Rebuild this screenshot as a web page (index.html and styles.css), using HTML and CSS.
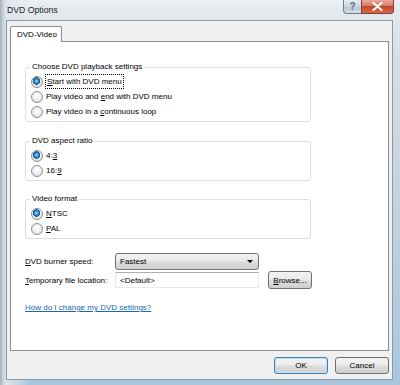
FILE: index.html
```html
<!DOCTYPE html>
<html lang="en">
<head>
    <meta charset="UTF-8">
    <title>DVD Options</title>
    <link rel="stylesheet" href="styles.css">
</head>
<body>
    <div class="window">
        <div class="titlebar">
            <div class="title">DVD Options</div>
            <div class="caption-buttons">
                <div class="cap-btn cap-help">?</div>
                <div class="cap-btn cap-close">
                    <svg width="11" height="9" viewBox="0 0 11 9">
                        <path d="M1.5 1 L9.5 8 M9.5 1 L1.5 8" stroke="#ffffff" stroke-width="2.2" stroke-linecap="round"/>
                    </svg>
                </div>
            </div>
        </div>

        <div class="client">
            <div class="tabs">
                <div class="tab">DVD-Video</div>
            </div>

            <div class="panel">
                <fieldset class="group">
                    <legend>Choose DVD playback settings</legend>
                    <label class="option"><input type="radio" name="play" checked><span class="focus"><u>S</u>tart with DVD menu</span></label>
                    <label class="option"><input type="radio" name="play"><span>Play video and <u>e</u>nd with DVD menu</span></label>
                    <label class="option"><input type="radio" name="play"><span>Play video in a <u>c</u>ontinuous loop</span></label>
                </fieldset>

                <fieldset class="group group-aspect">
                    <legend>DVD aspect ratio</legend>
                    <label class="option"><input type="radio" name="aspect" checked><span>4:<u>3</u></span></label>
                    <label class="option"><input type="radio" name="aspect"><span>16:<u>9</u></span></label>
                </fieldset>

                <fieldset class="group group-format">
                    <legend>Video format</legend>
                    <label class="option"><input type="radio" name="format" checked><span><u>N</u>TSC</span></label>
                    <label class="option"><input type="radio" name="format"><span><u>P</u>AL</span></label>
                </fieldset>

                <div class="setting-row">
                    <span class="setting-label"><u>D</u>VD burner speed:</span>
                    <div class="combo">
                        <span>Fastest</span>
                        <span class="combo-arrow"></span>
                    </div>
                </div>
                <div class="setting-row">
                    <span class="setting-label"><u>T</u>emporary file location:</span>
                    <div class="textbox">&lt;Default&gt;</div>
                    <button class="btn btn-browse"><u>B</u>rowse...</button>
                </div>

                <a href="#" class="help-link">How do I change my DVD settings?</a>
            </div>

            <div class="dialog-buttons">
                <button class="btn btn-default">OK</button>
                <button class="btn">Cancel</button>
            </div>
        </div>
    </div>
</body>
</html>
```

FILE: styles.css
```css
* {
    box-sizing: border-box;
}

body {
    margin: 0;
    width: 400px;
    height: 385px;
    overflow: hidden;
    font-family: "Liberation Sans", Arial, sans-serif;
    font-size: 8px;
    line-height: 13px;
    color: #000000;
}

.window {
    width: 400px;
    height: 385px;
    display: flex;
    flex-direction: column;
    background:
        linear-gradient(90deg, #9fb1c2 0px, #c9d3dc 3px, #dfe5ea 6px, rgba(223, 229, 234, 0) 30px),
        linear-gradient(180deg, #eef1f3 0px, #e4e9ed 10px, #d6dee5 60px, #bccfde 250px, #a9c6dc 385px);
}

.titlebar {
    height: 20px;
    display: flex;
    justify-content: space-between;
    align-items: flex-start;
}

.title {
    padding: 4px 0 0 7px;
    font-size: 8.7px;
    color: #1c1c1c;
}

.caption-buttons {
    display: flex;
    margin-right: 6px;
}

.cap-btn {
    height: 14px;
    display: flex;
    align-items: center;
    justify-content: center;
    border: 1px solid #6d7c8c;
    border-top: none;
}

.cap-help {
    width: 18px;
    border-radius: 0 0 0 4px;
    border-right: none;
    background: linear-gradient(180deg, #e6ecf1 0%, #cad5df 50%, #b6c5d2 51%, #d3dee7 100%);
    color: #5b6a7a;
    font-size: 10px;
    font-weight: bold;
}

.cap-close {
    width: 33px;
    border-radius: 0 0 4px 0;
    border-color: #8a3a2e;
    background: linear-gradient(180deg, #e8a99b 0%, #d47a67 45%, #c2452b 50%, #d76b4a 100%);
}

.client {
    flex: 1;
    margin: 0 7px 5px 6px;
    border: 1px solid #8d9aa8;
    background-color: #f0f0f0;
    padding: 5px 3px 0 3px;
    display: flex;
    flex-direction: column;
}

.tabs {
    display: flex;
    height: 15px;
}

.tab {
    position: relative;
    z-index: 1;
    width: 52px;
    height: 16px;
    padding: 1px 0 0 6px;
    background-color: #ffffff;
    border: 1px solid #898c95;
    border-bottom: none;
    border-radius: 2px 2px 0 0;
}

.panel {
    flex: 1;
    background-color: #ffffff;
    border: 1px solid #898c95;
    padding: 18px 14px 0 14px;
    display: flex;
    flex-direction: column;
    align-items: flex-start;
}

.group {
    width: 286px;
    margin: 0;
    padding: 0 0 2px 5px;
    border: 1px solid #d5dfe5;
    border-radius: 3px;
}

.group legend {
    padding: 0 2px;
    margin-left: -1px;
    line-height: 14px;
}

.group-aspect {
    margin-top: 12px;
}

.group-format {
    margin-top: 11px;
}

.option {
    display: flex;
    align-items: center;
    height: 15px;
    gap: 2px;
}

.option input {
    appearance: none;
    -webkit-appearance: none;
    width: 12px;
    height: 12px;
    margin: 0 1px 0 0;
    border-radius: 50%;
    border: 1px solid #8e8f8f;
    background: radial-gradient(circle at 50% 40%, #ffffff 0%, #f0f0f0 45%, #d4d4d4 100%);
}

.option input:checked {
    background:
        radial-gradient(circle at 45% 40%, #9fe0ff 0px, #2a8fd4 2px, #1b4e82 3.5px, rgba(0, 0, 0, 0) 4px),
        radial-gradient(circle at 50% 40%, #ffffff 0%, #f0f0f0 45%, #d4d4d4 100%);
}

.focus {
    outline: 1px dotted #000000;
    outline-offset: 0;
    padding: 0 1px;
}

.setting-row {
    display: flex;
    align-items: center;
    height: 17px;
}

.setting-row + .setting-row {
    margin-top: 1px;
    height: 18px;
}

.group-format + .setting-row {
    margin-top: 14px;
}

.setting-label {
    width: 90px;
}

.combo {
    width: 144px;
    height: 17px;
    display: flex;
    align-items: center;
    justify-content: space-between;
    padding: 0 5px 0 4px;
    border: 1px solid #707070;
    border-radius: 3px;
    background: linear-gradient(180deg, #f4f4f4 0%, #e8e8e8 48%, #dcdcdc 52%, #cfcfcf 100%);
}

.combo-arrow {
    width: 0;
    height: 0;
    border-left: 3px solid transparent;
    border-right: 3px solid transparent;
    border-top: 3px solid #000000;
}

.textbox {
    width: 144px;
    height: 16px;
    padding: 1px 4px 0 4px;
    background-color: #ffffff;
    border: 1px solid #e3e9ef;
    border-top-color: #abadb3;
}

.btn {
    font-family: inherit;
    font-size: inherit;
    color: #000000;
    height: 17px;
    padding: 0;
    border: 1px solid #707070;
    border-radius: 3px;
    background: linear-gradient(180deg, #f2f2f2 0%, #ebebeb 48%, #dddddd 52%, #cfcfcf 100%);
}

.btn-browse {
    width: 44px;
    height: 18px;
    margin-left: 9px;
}

.help-link {
    margin-top: 12px;
    color: #1b67b3;
    line-height: 13px;
}

.dialog-buttons {
    display: flex;
    justify-content: flex-end;
    gap: 7px;
    height: 17px;
    margin: 6px 0 5px 0;
}

.dialog-buttons .btn {
    width: 54px;
}

.btn-default {
    border-color: #3c7fb1;
    box-shadow: inset 0 0 0 1px #bde2f5;
}
```
